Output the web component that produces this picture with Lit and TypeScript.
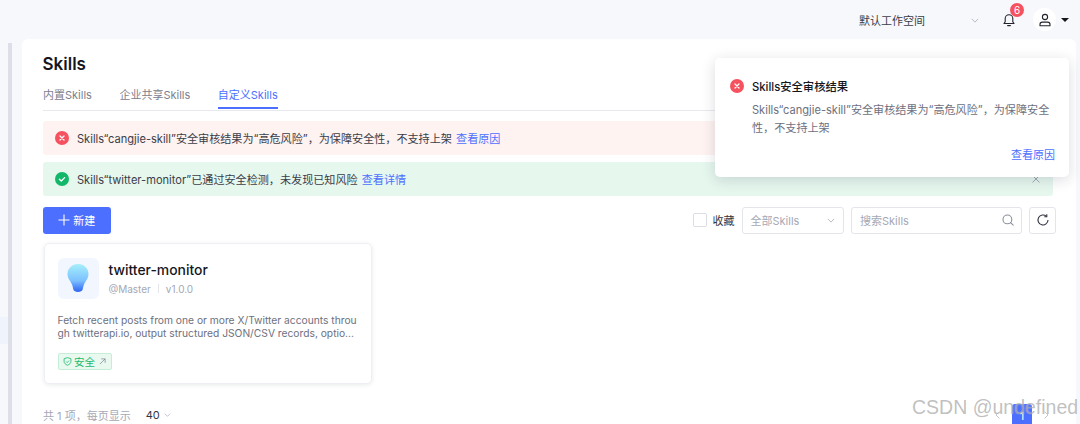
import { LitElement, css, html } from "lit";
import { customElement } from "lit/decorators.js";

const errorIcon = html`<svg class="status" viewBox="0 0 14 14"><circle cx="7" cy="7" r="7" fill="#f5515f"/><path d="M5 5l4 4M9 5l-4 4" stroke="#fff" stroke-width="1.3" stroke-linecap="round"/></svg>`;
const okIcon = html`<svg class="status" viewBox="0 0 14 14"><circle cx="7" cy="7" r="7" fill="#12b76a"/><path d="M4.4 7.2l1.9 1.8 3.3-3.4" fill="none" stroke="#fff" stroke-width="1.3" stroke-linecap="round" stroke-linejoin="round"/></svg>`;
const chevron = html`<svg class="chev" viewBox="0 0 10 6"><path d="M1 1l4 4 4-4" fill="none" stroke="currentColor" stroke-width="1"/></svg>`;

@customElement("app-root")
export class AppRoot extends LitElement {
  static styles = css`
    :host {
      display: flex;
      flex-direction: column;
      position: relative;
      width: 1080px;
      height: 424px;
      overflow: hidden;
      background: #f6f8fc;
      font-family: Inter, "Noto Sans CJK SC", sans-serif;
      font-size: 12px;
      color: #33353f;
    }
    .top {
      flex: none;
      height: 39px;
      display: flex;
      align-items: center;
      padding-right: 11px;
      justify-content: flex-end;
    }
    .workspace {
      width: 120px;
      display: flex;
      justify-content: space-between;
      align-items: center;
      padding-top: 1px;
      color: #3b3d48;
      font-size: 11px;
    }
    .workspace .chev {
      width: 8px;
      height: 5px;
      color: #a9adba;
    }
    .bell {
      position: relative;
      width: 16px;
      height: 16px;
      margin-left: 22px;
    }
    .bell svg {
      width: 16px;
      height: 16px;
      display: block;
    }
    .badge {
      position: absolute;
      left: 9px;
      top: -9px;
      width: 14px;
      height: 14px;
      border-radius: 50%;
      background: #f5515f;
      color: #fff;
      font-size: 10px;
      line-height: 14px;
      text-align: center;
    }
    .avatar {
      width: 23px;
      height: 23px;
      margin-left: 16px;
      border-radius: 50%;
      background: #fff;
      display: flex;
      align-items: center;
      justify-content: center;
    }
    .avatar svg {
      width: 14px;
      height: 14px;
    }
    .caret {
      width: 0;
      height: 0;
      margin-left: 5px;
      border: 4px solid transparent;
      border-top: 4px solid #15161c;
      border-bottom: 0;
    }
    .body {
      flex: 1;
      display: flex;
      min-height: 0;
    }
    .side {
      flex: none;
      width: 22px;
      display: flex;
      position: relative;
    }
    .scroll {
      width: 4px;
      margin: 4px 0 0 8px;
      background: #dcdee8;
    }
    .side-active {
      position: absolute;
      left: 0;
      top: 278px;
      width: 8px;
      height: 27px;
      background: #eff3fc;
    }
    .panel {
      flex: none;
      width: 1054px;
      box-sizing: border-box;
      background: #fff;
      border-radius: 6px 6px 0 0;
      padding: 15px 23px 0 20.5px;
    }
    h1 {
      margin: 0;
      font-size: 17px;
      line-height: 20px;
      font-weight: 600;
      color: #15161c;
    }
    .tabs {
      display: flex;
      gap: 27.5px;
      height: 27px;
      margin-top: 8px;
      border-bottom: 1px solid #e8e9ee;
      box-sizing: content-box;
      padding: 1px 0 0 0.5px;
    }
    .tab {
      line-height: 25px;
      height: 26px;
      color: #7d808e;
      font-size: 11px;
    }
    .tab.on {
      color: #4d6fff;
      height: 24px;
      border-bottom: 2px solid #4d6fff;
    }
    .alert {
      height: 34px;
      margin-top: 7px;
      border-radius: 3px;
      display: flex;
      align-items: center;
      gap: 8px;
      padding: 0 13px 0 12.5px;
      font-size: 11.1px;
      color: #3b3d48;
    }
    .alert.err {
      margin-top: 10px;
      background: #fef3f1;
    }
    .alert.ok {
      background: #e6f7ee;
    }
    .status {
      width: 14px;
      height: 14px;
      flex: none;
    }
    .alert a,
    .toast a {
      color: #4d6fff;
    }
    .alert a {
      margin-left: 1px;
    }
    .close {
      margin-left: auto;
      width: 8px;
      height: 8px;
      color: #a4a8b4;
    }
    .bar {
      display: flex;
      align-items: center;
      height: 27px;
      margin: 10.5px -3px 0 0;
    }
    .new {
      width: 67.5px;
      height: 27px;
      margin-left: 0.5px;
      border-radius: 3px;
      background: #4d6fff;
      color: #fff;
      display: flex;
      align-items: center;
      justify-content: center;
      gap: 3px;
      font-size: 11px;
    }
    .new svg {
      width: 12px;
      height: 12px;
    }
    .check {
      width: 12px;
      height: 12px;
      margin-left: auto;
      border: 1px solid #dcdee5;
      border-radius: 2px;
    }
    .fav {
      margin-left: 6px;
      font-size: 11px;
      color: #33353f;
    }
    .field {
      height: 27px;
      box-sizing: border-box;
      border: 1px solid #e3e5ea;
      border-radius: 3px;
      display: flex;
      align-items: center;
      justify-content: space-between;
      padding: 0 8px;
      color: #a5a8b6;
      font-size: 11px;
    }
    .select {
      width: 102.5px;
      margin-left: 7px;
    }
    .select .chev {
      width: 8px;
      height: 5px;
    }
    .search {
      width: 171px;
      margin-left: 7px;
      padding-right: 7px;
    }
    .search svg {
      width: 12px;
      height: 12px;
    }
    .refresh {
      width: 27px;
      margin-left: 7px;
      padding: 0;
      justify-content: center;
    }
    .refresh svg {
      width: 14px;
      height: 14px;
    }
    .card {
      width: 328px;
      height: 141px;
      margin: 9.5px 0 0 1px;
      box-sizing: border-box;
      border: 1px solid #eeeff3;
      border-radius: 5px;
      box-shadow: 0 1px 4px rgba(30, 40, 70, 0.1);
      padding: 13.500px 13px 0;
    }
    .card-head {
      display: flex;
      gap: 10px;
    }
    .logo {
      width: 41px;
      height: 41px;
      border-radius: 6px;
      background: #f2f6fe;
      display: flex;
      align-items: center;
      justify-content: center;
    }
    .logo svg {
      width: 22px;
      height: 30px;
    }
    .name {
      font-size: 13.9px;
      font-weight: 500;
      line-height: 16px;
      margin-top: 4px;
      color: #15161c;
    }
    .meta {
      display: flex;
      align-items: center;
      margin-top: 4px;
      color: #a5a8b6;
      font-size: 10px;
      line-height: 14px;
    }
    .meta i {
      width: 1px;
      height: 9px;
      margin: 0 7px;
      background: #e3e5ea;
    }
    .desc {
      margin-top: 15px;
      width: 302px;
      color: #6d707e;
      font-size: 10.25px;
      line-height: 13.6px;
      word-break: break-all;
    }
    .tag {
      display: inline-flex;
      align-items: center;
      gap: 2px;
      height: 15px;
      margin-top: 12px;
      padding: 0 5px 0 4.500px;
      border: 1px solid #c5eed8;
      border-radius: 2px;
      background: #e9f9f0;
      color: #19b96e;
      font-size: 10.5px;
    }
    .tag svg {
      width: 9px;
      height: 9px;
    }
    .tag .arrow {
      width: 7px;
      height: 7px;
      margin-left: 2px;
      color: #7d808e;
    }
    .pager {
      display: flex;
      align-items: center;
      margin: 22.5px 0 0 0.5px;
      height: 16px;
      color: #a5a8b6;
      font-size: 11px;
    }
    .pager b {
      margin-left: 15px;
      font-weight: 400;
      font-size: 11px;
      color: #33353f;
    }
    .pager .chev {
      width: 7px;
      height: 4px;
      margin-left: 4px;
    }
    .pages {
      margin: 0 4px 0 auto;
      display: flex;
      align-items: center;
      gap: 12px;
      color: #c3c6d0;
    }
    .pages svg {
      width: 5px;
      height: 8px;
    }
    .page {
      width: 20px;
      height: 24px;
      margin-top: 2px;
      border-radius: 3px;
      background: #4d6fff;
      color: #fff;
      font-size: 11px;
      line-height: 24px;
      text-align: center;
    }
    .toast {
      position: absolute;
      left: 715px;
      top: 58px;
      width: 354px;
      height: 119px;
      box-sizing: border-box;
      padding: 20px 14px 0 15px;
      border-radius: 5px;
      background: #fff;
      box-shadow: 0 3px 14px rgba(30, 40, 70, 0.16);
    }
    .toast-head {
      display: flex;
      align-items: center;
      gap: 8px;
      font-size: 11.3px;
      font-weight: 500;
      color: #15161c;
    }
    .toast p {
      margin: 8px 0 0 22px;
      color: #6d707e;
      font-size: 11.1px;
      line-height: 17.5px;
    }
    .toast a {
      display: block;
      margin-top: 9px;
      text-align: right;
      font-size: 11px;
    }
    .mark {
      position: absolute;
      left: 912px;
      top: 396px;
      font-family: "Liberation Sans", sans-serif;
      font-size: 19.5px;
      line-height: 22px;
      color: rgba(130, 130, 130, 0.5);
      text-shadow: 0 0 1px rgba(255, 255, 255, 0.6);
    }
  `;

  render() {
    return html`
      <div class="top">
        <div class="workspace"><span>默认工作空间</span>${chevron}</div>
        <div class="bell">
          <svg viewBox="0 0 16 16" fill="none" stroke="#22242c" stroke-width="1.1" stroke-linejoin="round"><path d="M3 11.500h10l-1.200-1.800V6.600a3.800 3.800 0 0 0-7.600 0v3.100z"/><path d="M6.600 13.600h2.800" stroke-linecap="round"/></svg>
          <span class="badge">6</span>
        </div>
        <div class="avatar">
          <svg viewBox="0 0 14 14" fill="none" stroke="#22242c" stroke-width="1.1"><circle cx="7" cy="4" r="2.600"/><path d="M2 12.800v-1.400c0-1.300 1-2.300 2.300-2.300h5.400c1.300 0 2.300 1 2.300 2.300v1.400z" stroke-linejoin="round"/></svg>
        </div>
        <div class="caret"></div>
      </div>
      <div class="body">
        <div class="side">
          <div class="scroll"></div>
          <div class="side-active"></div>
        </div>
        <div class="panel">
          <h1>Skills</h1>
          <div class="tabs">
            <div class="tab">内置Skills</div>
            <div class="tab">企业共享Skills</div>
            <div class="tab on">自定义Skills</div>
          </div>
          <div class="alert err">
            ${errorIcon}
            <span>Skills“cangjie-skill”安全审核结果为“高危风险”，为保障安全性，不支持上架 <a>查看原因</a></span>
          </div>
          <div class="alert ok">
            ${okIcon}
            <span>Skills“twitter-monitor”已通过安全检测，未发现已知风险 <a>查看详情</a></span>
            <svg class="close" viewBox="0 0 8 8"><path d="M.5.5l7 7M7.500.5l-7 7" stroke="currentColor" stroke-width="1"/></svg>
          </div>
          <div class="bar">
            <div class="new">
              <svg viewBox="0 0 12 12"><path d="M6 .5v11M.5 6h11" stroke="#fff" stroke-width="1.100"/></svg>
              <span>新建</span>
            </div>
            <div class="check"></div>
            <span class="fav">收藏</span>
            <div class="field select"><span>全部Skills</span>${chevron}</div>
            <div class="field search">
              <span>搜索Skills</span>
              <svg viewBox="0 0 12 12" fill="none" stroke="#8d909e" stroke-width="1.100"><circle cx="5.400" cy="5.400" r="4.400"/><path d="M8.600 8.600l2.600 2.600" stroke-linecap="round"/></svg>
            </div>
            <div class="field refresh">
              <svg viewBox="0 0 14 14" fill="none" stroke="#33353f" stroke-width="1.100"><path d="M12 7a5 5 0 1 1-1.600-3.700"/><path d="M10.800 1.200v2.500H8.300" stroke-linejoin="round"/></svg>
            </div>
          </div>
          <div class="card">
            <div class="card-head">
              <div class="logo">
                <svg viewBox="0 0 22 30">
                  <defs>
                    <linearGradient id="bulb" x1="0" y1="0" x2="0" y2="1">
                      <stop offset="0" stop-color="#a5effa"/>
                      <stop offset="0.6" stop-color="#7cc0ff"/>
                      <stop offset="0.85" stop-color="#4a84f8"/>
                      <stop offset="1" stop-color="#2f68f0"/>
                    </linearGradient>
                    <filter id="soft"><feGaussianBlur stdDeviation="0.4"/></filter>
                  </defs>
                  <path d="M11 1C5 1 .5 5.500.5 11c0 4.500 3 7 4.500 10.500.9 2 .9 3.500 1.300 5 .4 1.600 2.400 2.500 4.700 2.500s4.300-.9 4.700-2.500c.4-1.500.4-3 1.300-5C18.500 18 21.500 15.500 21.500 11 21.500 5.500 17 1 11 1z" fill="url(#bulb)" filter="url(#soft)"/>
                </svg>
              </div>
              <div>
                <div class="name">twitter-monitor</div>
                <div class="meta"><span>@Master</span><i></i><span>v1.0.0</span></div>
              </div>
            </div>
            <div class="desc">Fetch recent posts from one or more X/Twitter accounts through twitterapi.io, output structured JSON/CSV records, optio...</div>
            <div class="tag">
              <svg viewBox="0 0 10 10" fill="none" stroke="currentColor" stroke-width="0.9"><path d="M5 .7l3.800 1.200v3c0 2-1.700 3.400-3.800 4.300C2.900 8.300 1.200 6.900 1.200 4.900v-3z" stroke-linejoin="round"/><path d="M3.400 5l1.200 1.200 2-2.100"/></svg>
              <span>安全</span>
              <svg class="arrow" viewBox="0 0 8 8" fill="none" stroke="currentColor" stroke-width="0.8"><path d="M1 7l6-6M2.500 1H7v4.500"/></svg>
            </div>
          </div>
          <div class="pager">
            <span>共 1 项，每页显示</span><b>40</b>${chevron}
            <div class="pages">
              <svg viewBox="0 0 5 8"><path d="M4.500.5L1 4l3.500 3.500" fill="none" stroke="currentColor"/></svg>
              <div class="page">1</div>
              <svg viewBox="0 0 5 8"><path d="M.5.5L4 4 .5 7.500" fill="none" stroke="currentColor"/></svg>
            </div>
          </div>
        </div>
      </div>
      <div class="toast">
        <div class="toast-head">${errorIcon}<span>Skills安全审核结果</span></div>
        <p>Skills“cangjie-skill”安全审核结果为“高危风险”，为保障安全性，不支持上架</p>
        <a>查看原因</a>
      </div>
      <div class="mark">CSDN @undefined</div>
    `;
  }
}
